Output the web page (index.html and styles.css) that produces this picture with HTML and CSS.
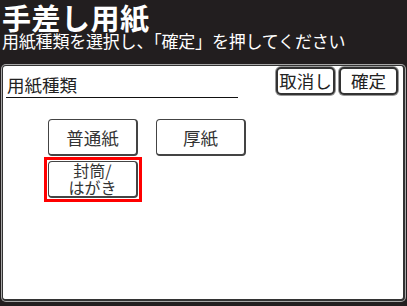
FILE: index.html
```html
<!DOCTYPE html>
<html lang="ja">
<head>
  <meta charset="UTF-8" />
  <title>手差し用紙</title>
  <link rel="stylesheet" href="styles.css">
</head>
<body>

  <div class="header">
    <h1 class="title">手差し用紙</h1>
    <div class="subtitle">用紙種類を選択し、「確定」を押してください</div>
  </div>

  <div class="panel">
    <div class="top-row">
      <div class="label">用紙種類</div>
      <div class="actions">
        <button class="act-btn">取消し</button>
        <button class="act-btn">確定</button>
      </div>
    </div>

    <div class="paper-grid">
      <button class="paper-btn">普通紙</button>
      <button class="paper-btn">厚紙</button>
      <div class="selected">
        <button class="paper-btn two-line">封筒/<br>はがき</button>
      </div>
    </div>
  </div>

</body>
</html>
```

FILE: styles.css
```css
body {
  margin: 0;
  background: #221e1f;
  font-family: "Noto Sans CJK JP", "Noto Sans", sans-serif;
  width: 407px;
  height: 306px;
  overflow: hidden;
}

.header {
  padding: 2px 0 0 2px;
  color: #fff;
}

.title {
  margin: 0;
  font-size: 29px;
  line-height: 30px;
  font-weight: bold;
  letter-spacing: 0.5px;
}

.subtitle {
  font-size: 17px;
  line-height: 18px;
  letter-spacing: -0.2px;
}

.panel {
  margin: 15px 2px 0 2px;
  height: 232px;
  background: #fff;
  border: 1px solid #333;
  border-right-width: 2px;
  border-bottom-width: 2px;
  border-radius: 4px;
  box-shadow: 0 0 0 1px #a8a8a8;
  padding: 1px 5px 0 3px;
}

.top-row {
  display: flex;
  justify-content: space-between;
  align-items: flex-start;
}

.label {
  width: 231px;
  margin-top: 5px;
  padding-left: 1px;
  font-size: 17.5px;
  line-height: 25px;
  color: #222;
  border-bottom: 1px solid #111;
}

.actions {
  display: flex;
  gap: 4px;
}

.act-btn {
  width: 59px;
  height: 28px;
  padding: 0;
  background: #fff;
  border: 2px solid #333;
  border-radius: 5px;
  box-shadow: 0 0 0 1px #999;
  font-family: inherit;
  font-size: 17.5px;
  line-height: 22px;
  color: #222;
}

.paper-grid {
  display: grid;
  grid-template-columns: 90px 90px;
  column-gap: 18px;
  row-gap: 5px;
  margin: 21px 0 0 42px;
}

.paper-btn {
  width: 100%;
  height: 37px;
  padding: 0;
  background: #fff;
  border: 1px solid #444;
  border-right-width: 2px;
  border-bottom-width: 2px;
  border-radius: 4px;
  font-family: inherit;
  font-size: 17.5px;
  color: #333;
}

.two-line {
  display: block;
  font-size: 16px;
  line-height: 17px;
}

.selected {
  margin: -4px;
  padding: 1px;
  border: 3px solid #f00;
}
```
